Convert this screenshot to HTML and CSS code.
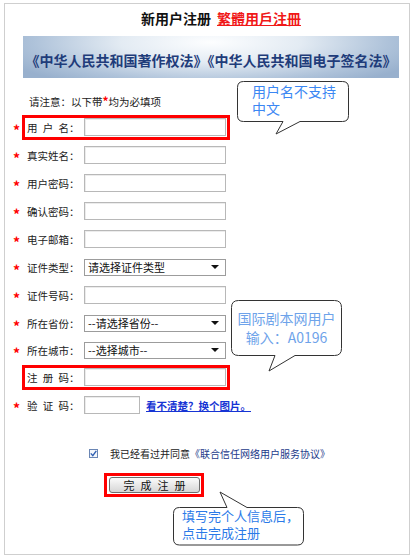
FILE: index.html
```html
<!DOCTYPE html>
<html lang="zh-CN">
<head>
	<meta charset="UTF-8">
	<title>新用户注册</title>
	<link rel="stylesheet" href="styles.css">
</head>
<body>
	<div class="page">
		<h1 class="title">新用户注册<a href="javascript:void(0);" class="title-link">繁體用戶注冊</a></h1>
		<div class="banner">《中华人民共和国著作权法》《中华人民共和国电子签名法》</div>
		<p class="notice">请注意：以下带<span class="notice-star">*</span>均为必填项</p>

		<form class="reg" action="">
			<div class="row">
				<span class="star">*</span>
				<div class="field field-mark">
					<span class="label"><span class="name">用户名</span>：</span>
					<input type="text" class="text">
				</div>
			</div>
			<div class="row">
				<span class="star">*</span>
				<div class="field">
					<span class="label"><span class="name">真实姓名</span>：</span>
					<input type="text" class="text">
				</div>
			</div>
			<div class="row">
				<span class="star">*</span>
				<div class="field">
					<span class="label"><span class="name">用户密码</span>：</span>
					<input type="password" class="text">
				</div>
			</div>
			<div class="row">
				<span class="star">*</span>
				<div class="field">
					<span class="label"><span class="name">确认密码</span>：</span>
					<input type="password" class="text">
				</div>
			</div>
			<div class="row">
				<span class="star">*</span>
				<div class="field">
					<span class="label"><span class="name">电子邮箱</span>：</span>
					<input type="text" class="text">
				</div>
			</div>
			<div class="row">
				<span class="star">*</span>
				<div class="field">
					<span class="label"><span class="name">证件类型</span>：</span>
					<div class="select"><span>请选择证件类型</span><i class="arrow"></i></div>
				</div>
			</div>
			<div class="row">
				<span class="star">*</span>
				<div class="field">
					<span class="label"><span class="name">证件号码</span>：</span>
					<input type="text" class="text">
				</div>
			</div>
			<div class="row">
				<span class="star">*</span>
				<div class="field">
					<span class="label"><span class="name">所在省份</span>：</span>
					<div class="select"><span>--请选择省份--</span><i class="arrow"></i></div>
				</div>
			</div>
			<div class="row row-tight">
				<span class="star">*</span>
				<div class="field">
					<span class="label"><span class="name">所在城市</span>：</span>
					<div class="select"><span>--选择城市--</span><i class="arrow"></i></div>
				</div>
			</div>
			<div class="row">
				<span class="star"></span>
				<div class="field field-mark">
					<span class="label"><span class="name">注册码</span>：</span>
					<input type="text" class="text">
				</div>
			</div>
			<div class="row">
				<span class="star">*</span>
				<div class="field">
					<span class="label"><span class="name">验证码</span>：</span>
					<input type="text" class="text text-short">
					<a href="javascript:void(0);" class="refresh">看不清楚？换个图片。</a>
				</div>
			</div>
		</form>

		<div class="agree">
			<span class="check">
				<svg width="7" height="7" viewBox="0 0 7 7"><path d="M0.8 3.4 L2.8 5.6 L6.3 0.8" fill="none" stroke="#2f5fb3" stroke-width="1.4"/></svg>
			</span>
			<span>我已经看过并同意<a href="javascript:void(0);" class="agree-link">《联合信任网络用户服务协议》</a></span>
		</div>

		<div class="submit">
			<span class="btn-box"><button type="button" class="btn">完成注册</button></span>
		</div>

		<!-- 提示气泡 -->
		<div class="tip tip-user">
			<svg class="tip-shape" width="112" height="54" viewBox="0 0 112 54"><path d="M6.5 0.5 H105.5 Q111.5 0.5 111.5 6.5 V34.5 Q111.5 40.5 105.5 40.5 H63 L39 53 L46 40.5 H6.5 Q0.5 40.5 0.5 34.5 V6.5 Q0.5 0.5 6.5 0.5 Z" fill="#fff" stroke="#333"/></svg>
			<p class="tip-text">用户名不支持<br>中文</p>
		</div>
		<div class="tip tip-code">
			<svg class="tip-shape" width="111" height="73" viewBox="0 0 111 73"><path d="M7.5 0.5 H103.5 Q110.5 0.5 110.5 7.5 V48.5 Q110.5 55.5 103.5 55.5 H64 L38 71 L44 55.5 H7.5 Q0.5 55.5 0.5 48.5 V7.5 Q0.5 0.5 7.5 0.5 Z" fill="#fff" stroke="#333"/></svg>
			<p class="tip-text">国际剧本网用户<br>输入：A0196</p>
		</div>
		<div class="tip tip-done">
			<svg class="tip-shape" width="132" height="55" viewBox="0 0 132 55"><path d="M6.5 16.5 H54 L47 1 L74 16.5 H124.5 Q130.5 16.5 130.5 22.5 V48 Q130.5 54 124.5 54 H6.5 Q0.5 54 0.5 48 V22.5 Q0.5 16.5 6.5 16.5 Z" fill="#fff" stroke="#333"/></svg>
			<p class="tip-text">填写完个人信息后，<br>点击完成注册</p>
		</div>
	</div>
</body>
</html>
```

FILE: styles.css
```css
body{
	margin: 0;
	font-family: "Noto Sans CJK SC", "Noto Sans", sans-serif;
	color: #222;
	background: #fff;
}
.page{
	position: relative;
	width: 404px;
	height: 550px;
	margin: 3px 0 0 4px;
	border: 1px solid #cfcfcf;
}
.title{
	margin: 0;
	height: 28px;
	line-height: 28px;
	padding-left: 136px;
	font-size: 14px;
	font-weight: bold;
	color: #111;
}
.title-link{
	margin-left: 6px;
	color: #f01818;
	text-decoration: underline;
}
.banner{
	margin: 4px 10px 0 18px;
	height: 36px;
	padding-top: 6px;
	line-height: 36px;
	text-align: center;
	font-size: 14px;
	font-weight: bold;
	color: #1f3c7a;
	background: radial-gradient(ellipse 60% 120% at 50% 15%, #fdfeff 0%, #e3ebf3 40%, #afc3da 78%, #98b0cd 100%);
}
.notice{
	display: inline-block;
	margin: 14px 0 0 24px;
	line-height: 18px;
	font-size: 10.5px;
}
.notice-star{
	color: #f00;
	font-weight: bold;
	font-size: 12px;
}
.reg{
	margin-top: 2px;
}
.row{
	display: flex;
	align-items: center;
	height: 28px;
	padding-left: 8px;
}
.row-tight{
	height: 26px;
}
.star{
	width: 9px;
	height: 14px;
	padding-top: 5px;
	line-height: 14px;
	font-size: 14px;
	font-weight: bold;
	color: #f00;
}
.field{
	display: flex;
	align-items: center;
	height: 25px;
	box-sizing: border-box;
	border: 3px solid transparent;
	padding: 0 1px 0 2px;
}
.field-mark{
	border-color: #f00;
}
.label{
	display: flex;
	width: 57px;
	font-size: 10.5px;
	white-space: nowrap;
	color: #222;
}
.name{
	display: inline-block;
	width: 42px;
	text-align: justify;
	text-align-last: justify;
}
.text{
	width: 142px;
	height: 18px;
	box-sizing: border-box;
	margin: 0;
	padding: 0 3px;
	border: 1px solid #b8b8b8;
	box-shadow: inset 1px 1px 0 #ececec;
	background: #fff;
}
.text-short{
	width: 56px;
}
.select{
	display: flex;
	align-items: center;
	justify-content: space-between;
	width: 142px;
	height: 17px;
	box-sizing: border-box;
	padding: 0 6px 0 3px;
	border: 1px solid #9c9c9c;
	background: #fff;
	font-size: 11px;
	color: #111;
}
.arrow{
	width: 0;
	height: 0;
	border-left: 4px solid transparent;
	border-right: 4px solid transparent;
	border-top: 4px solid #111;
}
.refresh{
	margin-left: 6px;
	font-size: 10.5px;
	font-weight: bold;
	white-space: nowrap;
	color: #1634d4;
	text-decoration: underline;
}
.agree{
	display: flex;
	align-items: center;
	height: 18px;
	margin-top: 25px;
	padding-left: 84px;
	font-size: 10px;
	color: #222;
}
.check{
	display: flex;
	align-items: center;
	justify-content: center;
	width: 9px;
	height: 9px;
	box-sizing: border-box;
	margin-right: 12px;
	border: 1px solid #6a86b4;
	background: #f4f7fb;
}
.agree-link{
	color: #1c3a8a;
	text-decoration: none;
}
.submit{
	display: flex;
	margin-top: 11px;
	padding-left: 99px;
}
.btn-box{
	display: inline-flex;
	border: 3px solid #f00;
	padding: 1px 1px 1px 2px;
}
.btn{
	width: 91px;
	height: 16px;
	padding: 0 0 0 6px;
	border: 1px solid #6e6e6e;
	border-radius: 3px;
	background: linear-gradient(#fbfbfb, #d6d6d6);
	font-family: "Noto Sans CJK SC", sans-serif;
	font-size: 11px;
	line-height: 14px;
	letter-spacing: 6px;
	color: #111;
}
.tip{
	position: absolute;
}
.tip-shape{
	position: absolute;
	left: 0;
	top: 0;
	overflow: visible;
}
.tip-text{
	position: relative;
	margin: 0;
}
.tip-user{
	left: 232px;
	top: 77px;
	width: 112px;
	height: 54px;
}
.tip-user .tip-text{
	padding: 2px 0 0 15px;
	font-size: 14px;
	line-height: 17px;
	color: #3b87f3;
}
.tip-code{
	left: 226px;
	top: 296px;
	width: 111px;
	height: 73px;
}
.tip-code .tip-text{
	padding-top: 9px;
	text-align: center;
	font-size: 14px;
	line-height: 19px;
	color: #6ea3ea;
}
.tip-done{
	left: 168px;
	top: 487px;
	width: 132px;
	height: 55px;
}
.tip-done .tip-text{
	padding: 16px 0 0 9px;
	font-size: 13px;
	line-height: 17px;
	color: #2b7ae8;
}
```
